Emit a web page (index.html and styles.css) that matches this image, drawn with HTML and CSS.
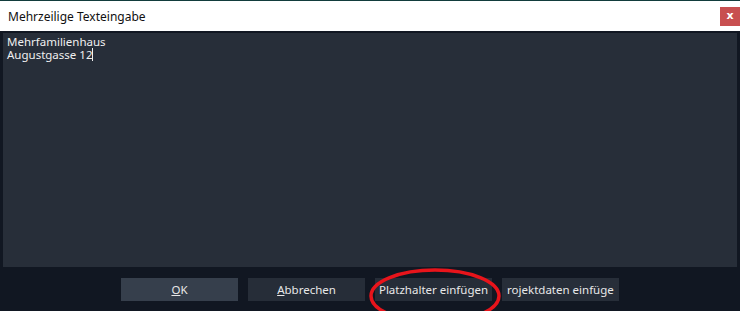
FILE: index.html
```html
<!DOCTYPE html>
<html lang="de">
<head>
    <meta charset="UTF-8">
    <title>Mehrzeilige Texteingabe</title>
    <link rel="stylesheet" href="styles.css">
</head>
<body>
    <div class="dialog">
        <div class="titlebar">
            <span class="title">Mehrzeilige Texteingabe</span>
            <button class="close-btn">x</button>
        </div>
        <div class="content">
            <div class="editor">
                <div>Mehrfamilienhaus</div>
                <div>Augustgasse 12<span class="caret"></span></div>
            </div>
            <div class="buttons">
                <button class="btn btn-ok"><u>O</u>K</button>
                <button class="btn"><u>A</u>bbrechen</button>
                <button class="btn">Platzhalter einfügen</button>
                <button class="btn btn-cut"><span class="clip"><span>Projektdaten einfügen</span></span></button>
            </div>
            <svg class="mark" width="140" height="60" viewBox="0 0 140 60">
                <ellipse cx="68" cy="30" rx="64" ry="26" fill="none" stroke="#e8141b" stroke-width="3.5"/>
            </svg>
        </div>
    </div>
</body>
</html>
```
FILE: styles.css
```css
body {
    margin: 0;
    width: 740px;
    height: 311px;
    overflow: hidden;
    background: #123c3c;
    font-family: "Noto Sans", "Open Sans", sans-serif;
}

.dialog {
    margin-top: 1px;
    height: 310px;
    display: flex;
    flex-direction: column;
}

.titlebar {
    height: 30px;
    background: #ffffff;
    display: flex;
    align-items: center;
    justify-content: space-between;
    padding-left: 8px;
}

.title {
    font-size: 12px;
    color: #111;
}

.close-btn {
    width: 20px;
    height: 19px;
    border: none;
    background: #c84f50;
    color: #fff;
    font-family: "DejaVu Sans", sans-serif;
    font-weight: bold;
    font-size: 11px;
    padding: 0 0 2px 0;
}

.content {
    position: relative;
    flex: 1;
    background: #111722;
    padding: 2px 3px 0 3px;
    display: flex;
    flex-direction: column;
}

.editor {
    height: 234px;
    background: #272e39;
    color: #f0f0f0;
    font-size: 11.5px;
    line-height: 13px;
    padding: 2px 4px;
    box-sizing: border-box;
}

.caret {
    display: inline-block;
    width: 1px;
    height: 13px;
    background: #f0f0f0;
    vertical-align: top;
}

.buttons {
    display: flex;
    gap: 10px;
    padding-left: 118px;
    margin-top: 11px;
}

.btn {
    width: 117px;
    height: 23px;
    border: none;
    background: #262d38;
    color: #e8e8e8;
    font-family: inherit;
    font-size: 11.5px;
    padding: 0;
}

.btn-ok {
    background: #363f4c;
}

.btn-cut {
    background: #272e39;
    display: flex;
    align-items: center;
    justify-content: center;
}

.clip {
    width: 107px;
    overflow: hidden;
    white-space: nowrap;
    display: flex;
    justify-content: center;
}

.clip span {
    flex: none;
}

.mark {
    position: absolute;
    left: 367px;
    top: 235px;
}
```
